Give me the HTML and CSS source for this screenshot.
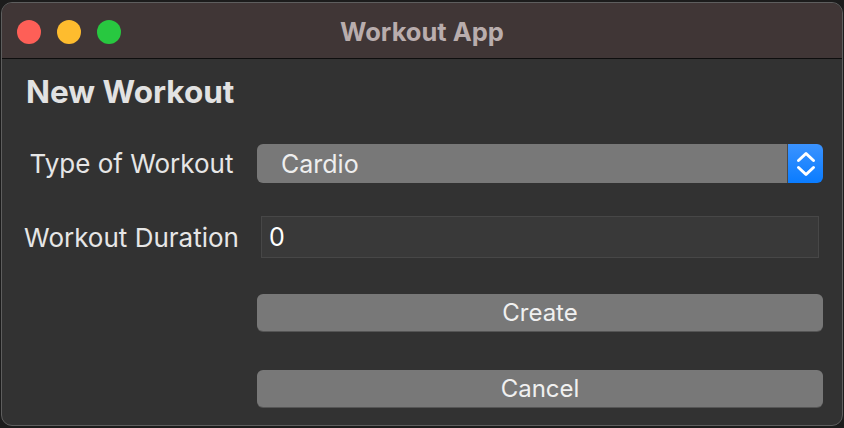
FILE: index.html
```html
<!DOCTYPE html>
<html>
<head>
<meta charset="utf-8">
<link rel="stylesheet" href="styles.css">
</head>
<body>
<div class="window">
  <div class="titlebar">
    <div class="lights">
      <span class="light red"></span>
      <span class="light yellow"></span>
      <span class="light green"></span>
    </div>
    <div class="title">Workout App</div>
  </div>
  <div class="content">
    <h1 class="heading">New Workout</h1>
    <div class="form">
      <div class="label row1">Type of Workout</div>
      <div class="combo row1">
        <div class="combo-value">Cardio</div>
        <div class="stepper">
          <svg width="20" height="30" viewBox="0 0 20 30">
            <path d="M2.5 11.5 L10 4.5 L17.5 11.5" fill="none" stroke="#fff" stroke-width="3" stroke-linecap="round" stroke-linejoin="round"/>
            <path d="M2.5 18.5 L10 25.5 L17.5 18.5" fill="none" stroke="#fff" stroke-width="3" stroke-linecap="round" stroke-linejoin="round"/>
          </svg>
        </div>
      </div>
      <div class="label row2">Workout Duration</div>
      <div class="field row2">0</div>
      <div class="button row3">Create</div>
      <div class="button row4">Cancel</div>
    </div>
  </div>
</div>
</body>
</html>
```

FILE: styles.css
```css
html, body {
  margin: 0;
  padding: 0;
  background: #1c1c1c;
  width: 844px;
  height: 428px;
  overflow: hidden;
}
body {
  font-family: Inter, "Liberation Sans", sans-serif;
}
.window {
  box-sizing: border-box;
  margin: 2px 1px 0 1px;
  width: 842px;
  height: 424px;
  border: 1px solid #5e5e5e;
  border-radius: 11px;
  background: #323232;
  overflow: hidden;
  display: flex;
  flex-direction: column;
}
.titlebar {
  height: 55px;
  background: #403636;
  border-bottom: 1px solid #0e0e0e;
  display: flex;
  align-items: center;
  position: relative;
  flex: none;
}
.lights {
  display: flex;
  gap: 16px;
  padding-left: 15px;
  padding-top: 2px;
}
.light {
  width: 24px;
  height: 24px;
  border-radius: 50%;
}
.red { background: #fe5f57; }
.yellow { background: #febc2e; }
.green { background: #28c840; }
.title {
  position: absolute;
  left: 0;
  right: 0;
  top: 0;
  bottom: 0;
  display: flex;
  align-items: center;
  justify-content: center;
  color: #b9adad;
  font-weight: 700;
  font-size: 25.5px;
  padding-top: 2px;
}
.content {
  padding: 15px 0 0 0;
}
.heading {
  margin: 0 0 0 24px;
  font-size: 31.5px;
  font-weight: 700;
  color: #e2e2e2;
  line-height: 36px;
}
.form {
  display: grid;
  grid-template-columns: 255px 566px;
  grid-template-rows: 39px 33px 42px 36px 37px 39px 37px;
  margin-top: 34px;
}
.row1 { grid-row: 1; }
.row2 { grid-row: 3; }
.row3 { grid-row: 5; }
.row4 { grid-row: 7; }
.label {
  grid-column: 1;
  color: #e6e6e6;
  font-size: 26px;
  display: flex;
  align-items: center;
  justify-content: center;
  padding-left: 4px;
  white-space: nowrap;
}
.combo {
  grid-column: 2;
  display: flex;
  height: 39px;
}
.combo-value {
  flex: 1;
  background: #787878;
  border-radius: 6px 0 0 6px;
  border-right: 1px solid #4a4a4a;
  color: #eeeeee;
  font-size: 25px;
  display: flex;
  align-items: center;
  padding-left: 24px;
}
.stepper {
  width: 35px;
  background: linear-gradient(#3b93ff, #0a7cff);
  border-radius: 0 6px 6px 0;
  display: flex;
  align-items: center;
  justify-content: center;
}
.field {
  grid-column: 2;
  box-sizing: border-box;
  margin-left: 4px;
  margin-right: 4px;
  height: 42px;
  background: #393939;
  border: 1px solid #474747;
  color: #ffffff;
  font-size: 25px;
  display: flex;
  align-items: center;
  padding-left: 7px;
}
.button {
  grid-column: 2;
  height: 37px;
  background: #787878;
  border-radius: 6px;
  box-shadow: 0 1px 0 #555;
  color: #f0f0f0;
  font-size: 24px;
  display: flex;
  align-items: center;
  justify-content: center;
}
```
